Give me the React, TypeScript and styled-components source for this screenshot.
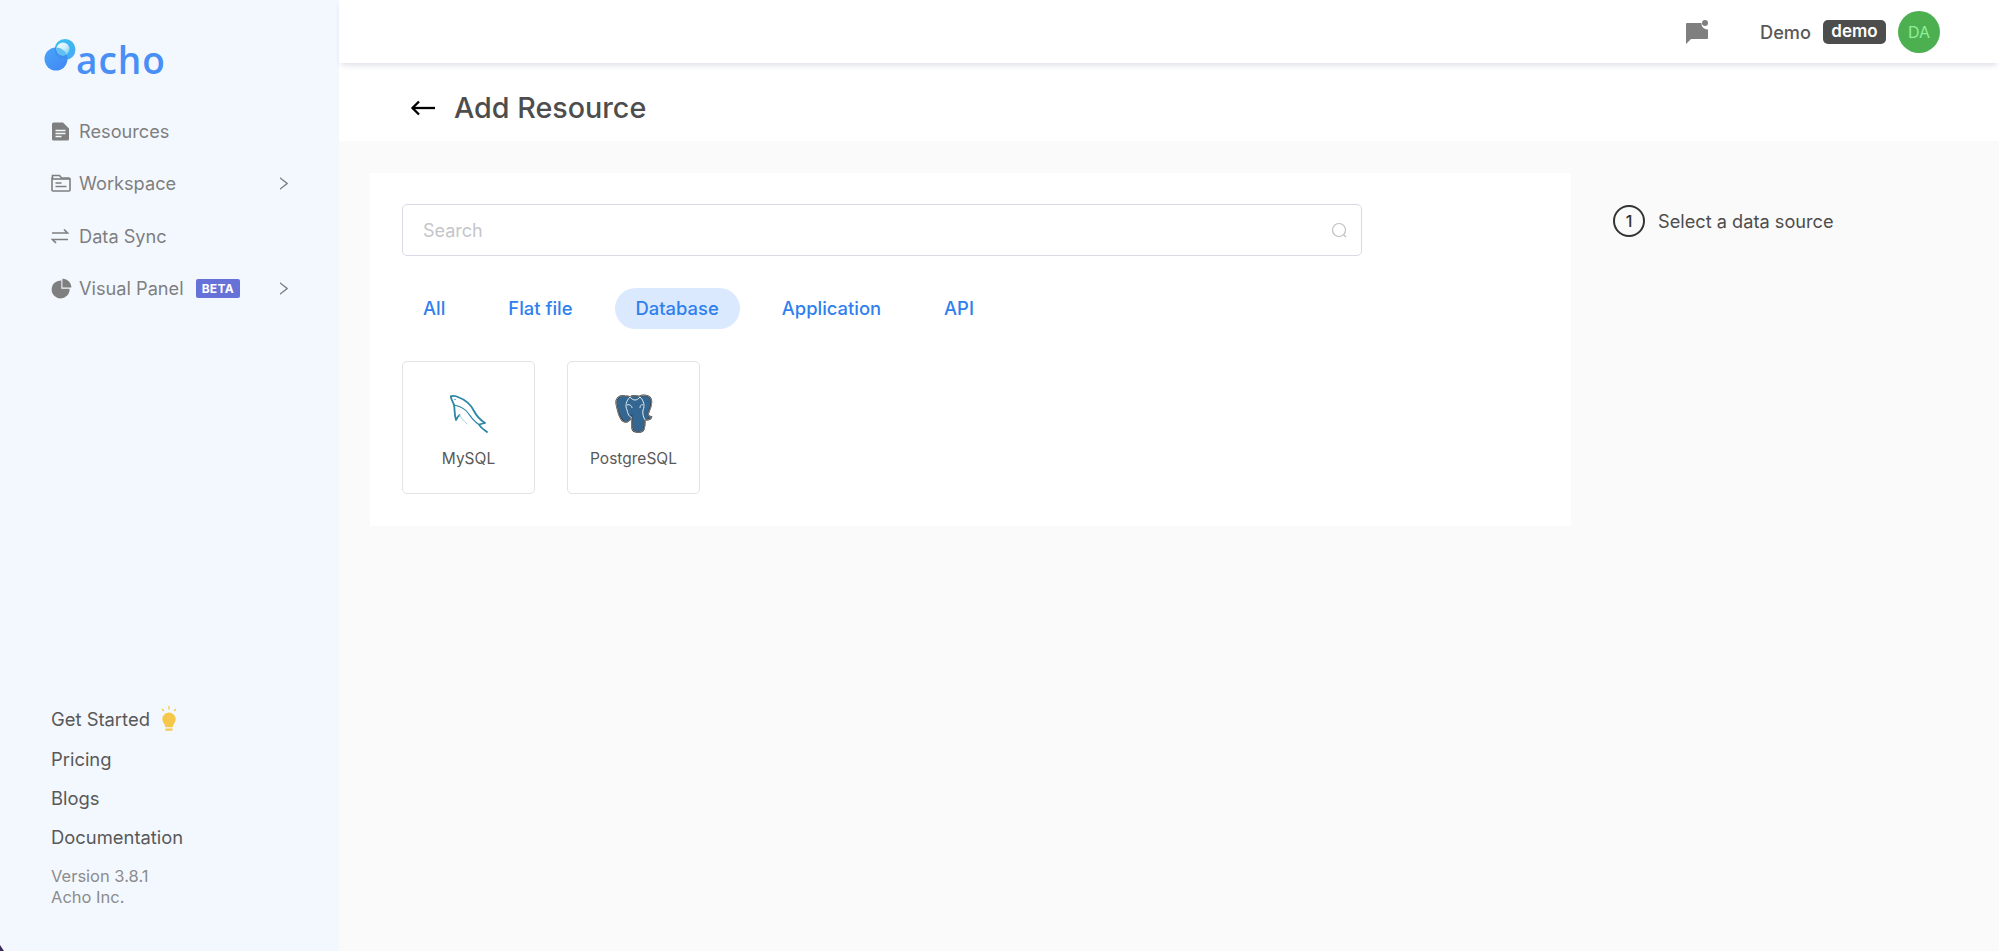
import styled, { createGlobalStyle } from 'styled-components';
import { AiFillPieChart, AiOutlineRight } from 'react-icons/ai';

const GlobalStyle = createGlobalStyle`
  html, body {
    margin: 0;
    padding: 0;
    background: #fafafa;
    font-family: Inter, "Liberation Sans", sans-serif;
  }
  * {
    box-sizing: border-box;
  }
`;

const PieIcon = styled(AiFillPieChart)`
  margin-left: -1.5px;
`;

const navItems = [
  { label: 'Resources', icon: <FileIcon /> },
  { label: 'Workspace', icon: <FolderIcon />, arrow: true },
  { label: 'Data Sync', icon: <SyncIcon /> },
  { label: 'Visual Panel', icon: <PieIcon size={23} />, arrow: true, beta: true },
];

const tabs = ['All', 'Flat file', 'Database', 'Application', 'API'];

function FileIcon() {
  return (
    <svg width="19" height="19" viewBox="0 0 19 19">
      <path d="M2.500 .5H12l6 6v10.500a1.500 1.500 0 0 1-1.500 1.500h-14A1.500 1.500 0 0 1 1 17V2A1.500 1.500 0 0 1 2.500 .5z" fill="currentColor" />
      <path d="M4.500 8.500h10M4.500 11.500h10M4.500 14.500h6" stroke="#f3f8ff" strokeWidth="1.400" />
    </svg>
  );
}

function FolderIcon() {
  return (
    <svg width="20" height="20" viewBox="0 0 20 20" fill="none" stroke="currentColor" strokeWidth="1.6">
      <path d="M1.500 5V2.500h7l2 2.500h7.500a1 1 0 0 1 1 1V17a1 1 0 0 1-1 1H2a1 1 0 0 1-1-1V5z" />
      <path d="M1 6h18" />
      <path d="M4.500 10h6M4.500 13.500h11" />
    </svg>
  );
}

function SyncIcon() {
  return (
    <svg width="18" height="18" viewBox="0 0 18 18" fill="none" stroke="currentColor" strokeWidth="1.700">
      <path d="M1 6h15.500L13 2.500" />
      <path d="M17 12.500H1.500L5 16" />
    </svg>
  );
}

function LogoMark() {
  return (
    <svg width="32" height="32" viewBox="0 0 32 32">
      <defs>
        <linearGradient id="logoBack" x1="0" y1="0" x2="1" y2="1">
          <stop offset="0" stopColor="#4aa5f7" />
          <stop offset="1" stopColor="#3f86f5" />
        </linearGradient>
        <linearGradient id="logoFront" x1="0" y1="0" x2="1" y2="1">
          <stop offset="0" stopColor="#35c2f0" />
          <stop offset="1" stopColor="#4aa8f5" />
        </linearGradient>
        <linearGradient id="logoHole" x1="0" y1="0" x2="1" y2="1">
          <stop offset="0" stopColor="#f4fbff" />
          <stop offset="0.5" stopColor="#d4f1fb" />
          <stop offset="1" stopColor="#57c8ee" />
        </linearGradient>
        <clipPath id="logoLens">
          <circle cx="12" cy="20" r="11.500" />
        </clipPath>
      </defs>
      <circle cx="12" cy="20" r="11.500" fill="url(#logoBack)" />
      <circle cx="21" cy="10.500" r="10.500" fill="url(#logoFront)" />
      <circle cx="21" cy="10.500" r="10.500" fill="#3f8ff2" clipPath="url(#logoLens)" />
      <circle cx="19" cy="10" r="6.500" fill="url(#logoHole)" />
      <circle cx="19" cy="10" r="6.500" fill="#5fc0f2" clipPath="url(#logoLens)" />
    </svg>
  );
}

function BulbIcon() {
  return (
    <svg width="16" height="27" viewBox="0 0 16 27">
      <path d="M8 0v3.500M1 3l2 2M15 3l-2 2" stroke="#f5c84c" strokeWidth="1.300" fill="none" />
      <path d="M8 6.500a6.700 6.700 0 0 1 6.700 6.700c0 3.200-2.700 4.800-3 8H4.300c-.3-3.200-3-4.800-3-8A6.700 6.700 0 0 1 8 6.500z" fill="#f5c84c" />
      <rect x="4.500" y="22.500" width="7" height="2.200" fill="#f5c84c" />
    </svg>
  );
}

function ChatIcon() {
  return (
    <svg width="23" height="24" viewBox="0 0 23 24" fill="#7f7f7f">
      <path d="M0 4a1 1 0 0 1 1-1h14.500a6 6 0 0 0 6.500 6.500V18a1 1 0 0 1-1 1H5l-5 5z" />
      <circle cx="19" cy="3" r="3" />
    </svg>
  );
}

function BackArrow() {
  return (
    <svg width="25" height="16" viewBox="0 0 25 16" fill="none" stroke="#000" strokeWidth="2.300">
      <path d="M25 8H2.500" />
      <path d="M9 1.500L2.500 8L9 14.500" />
    </svg>
  );
}

function SearchIcon() {
  return (
    <svg width="17" height="17" viewBox="0 0 17 17" fill="none" stroke="#bfbfbf" strokeWidth="1.200">
      <circle cx="8" cy="8" r="6.500" />
      <path d="M12.800 12.800l2.200 2.200" />
    </svg>
  );
}

function DolphinIcon() {
  return (
    <svg width="38" height="38" viewBox="0 0 38 38" fill="none" stroke="#2b86a8" strokeWidth="1.800" strokeLinecap="round" strokeLinejoin="round">
      <path d="M.7 1.500C3 .5 6 1 9 2.500c7 2.500 12 7.500 15 13.500 2 4 5 8 11 12l-6 1.500c1 2.500 4 4.500 8 7.500" />
      <path d="M.7 1.500C1 4 3 7 4 10c1 4 0 9 2 15 1-2 2-4 3.500-5" />
      <path d="M4 10c4 1 10 2 14 8 3 4 6 9 11 11.500" strokeWidth="1.200" />
      <path d="M9.500 20c1.500 3 3.500 5 7.500 9" stroke="#a9cfdd" strokeWidth="1" />
      <circle cx="5" cy="4.500" r=".7" fill="#2b86a8" stroke="none" />
    </svg>
  );
}

function ElephantIcon() {
  const outline =
    'M9 1C3 0-1 4 .5 10 2 17 4 26 9 27c3 .5 5-2 6.500-5l.5 11c1 5 10 6 12 1 1-3 1-6 1-9 3 0 6-1 6.500-3-2.500-.5-3.500-1-3.500-3 2-5 5-10 3-15-2-4-8-4.500-11.500-2.500-3.500-1-7.500-1-9.500.5-2-1-3.500-1-5-1z';
  return (
    <svg width="38" height="40" viewBox="-1 -1 38 40">
      <path d={outline} fill="#336791" stroke="#2a2a2a" strokeWidth="1.500" />
      <path d={outline} fill="none" stroke="#c9cdd1" strokeWidth="0.600" />
      <path
        d="M14 2c-4 4-5 9-3 13 1 4 2 7 4.500 7M11 10c3-1 5 1 5 3M14 2c3 4 7 4 10 0M24 2c4 4 5 9 3 13-1 4 1 8 2 10M27 10c-2-1-3 1-3 3"
        fill="none"
        stroke="#e6edf3"
        strokeWidth="1"
      />
    </svg>
  );
}

export default function App() {
  return (
    <>
      <GlobalStyle />
      <Layout>
        <Sidebar>
          <div>
            <Logo>
              <LogoMark />
              <LogoText>acho</LogoText>
            </Logo>
            <Nav>
              {navItems.map((item) => (
                <NavItem key={item.label}>
                  <NavIcon>{item.icon}</NavIcon>
                  <span>{item.label}</span>
                  {item.beta && <Beta>BETA</Beta>}
                  {item.arrow && (
                    <NavArrow>
                      <AiOutlineRight size={17} />
                    </NavArrow>
                  )}
                </NavItem>
              ))}
            </Nav>
          </div>
          <Footer>
            <FooterLink>
              Get Started
              <BulbIcon />
            </FooterLink>
            <FooterLink>Pricing</FooterLink>
            <FooterLink>Blogs</FooterLink>
            <FooterLink>Documentation</FooterLink>
            <Version>
              Version 3.8.1
              <br />
              Acho Inc.
            </Version>
          </Footer>
        </Sidebar>
        <Main>
          <TopBar>
            <ChatButton>
              <ChatIcon />
            </ChatButton>
            <UserName>Demo</UserName>
            <RoleBadge>demo</RoleBadge>
            <Avatar>DA</Avatar>
          </TopBar>
          <PageHeader>
            <BackArrow />
            <PageTitle>Add Resource</PageTitle>
          </PageHeader>
          <Content>
            <Card>
              <SearchBox>
                <SearchInput placeholder="Search" />
                <SearchIcon />
              </SearchBox>
              <Tabs>
                {tabs.map((tab) => (
                  <Tab key={tab} $active={tab === 'Database'}>
                    {tab}
                  </Tab>
                ))}
              </Tabs>
              <Sources>
                <Source>
                  <SourceLogo>
                    <DolphinIcon />
                  </SourceLogo>
                  MySQL
                </Source>
                <Source>
                  <SourceLogo>
                    <ElephantIcon />
                  </SourceLogo>
                  PostgreSQL
                </Source>
              </Sources>
            </Card>
            <Step>
              <StepNumber>1</StepNumber>
              Select a data source
            </Step>
          </Content>
        </Main>
        <WindowCorner />
      </Layout>
    </>
  );
}

const Layout = styled.div`
  display: flex;
  width: 100%;
  height: 951px;
  overflow: hidden;
  position: relative;
`;

const WindowCorner = styled.div`
  position: absolute;
  left: 0;
  bottom: 0;
  width: 4px;
  height: 6px;
  background: #3d2a5c;
  clip-path: polygon(0 0, 100% 100%, 0 100%);
`;

const Sidebar = styled.aside`
  flex: 0 0 339px;
  display: flex;
  flex-direction: column;
  justify-content: space-between;
  padding: 39px 0 43px 51px;
  background: #f3f8ff;
`;

const Logo = styled.div`
  display: flex;
  align-items: flex-start;
  height: 42px;
  margin-left: -7px;
`;

const LogoText = styled.span`
  font-family: "Open Sans", sans-serif;
  font-size: 37px;
  line-height: 42px;
  font-weight: 600;
  letter-spacing: 1px;
  color: #4a8ff5;
`;

const Nav = styled.nav`
  display: flex;
  flex-direction: column;
  margin-top: 24px;
`;

const NavItem = styled.div`
  display: flex;
  align-items: center;
  height: 52.3px;
  font-size: 18.2px;
  color: #7f7f7f;
`;

const NavIcon = styled.span`
  display: flex;
  align-items: center;
  width: 28px;
`;

const NavArrow = styled.span`
  display: flex;
  margin-left: auto;
  margin-right: 47px;
`;

const Beta = styled.span`
  margin-left: 12px;
  padding: 0 6px;
  height: 19px;
  line-height: 19px;
  border-radius: 2px;
  background: #6772d8;
  color: #fff;
  font-size: 12px;
  font-weight: 700;
  letter-spacing: 0.3px;
`;

const Footer = styled.div`
  display: flex;
  flex-direction: column;
`;

const FooterLink = styled.div`
  display: flex;
  align-items: center;
  gap: 11px;
  height: 39.3px;
  font-size: 18.4px;
  color: #595959;
`;

const Version = styled.div`
  margin-top: 9px;
  font-size: 16.5px;
  line-height: 21px;
  color: #8c8c8c;
`;

const Main = styled.main`
  flex: 1;
  display: flex;
  flex-direction: column;
  min-width: 0;
`;

const TopBar = styled.header`
  display: flex;
  align-items: center;
  justify-content: flex-end;
  height: 63px;
  padding-right: 59px;
  background: #fff;
  box-shadow: 0 4px 6px -2px rgba(60, 70, 120, 0.18);
  position: relative;
`;

const ChatButton = styled.span`
  display: flex;
  margin-right: 51px;
`;

const UserName = styled.span`
  font-size: 18.2px;
  font-weight: 500;
  color: #595959;
`;

const RoleBadge = styled.span`
  margin-left: 12px;
  width: 63px;
  height: 24px;
  line-height: 23px;
  border-radius: 5px;
  background: #4d4d4d;
  color: #fff;
  font-size: 17px;
  font-weight: 600;
  text-align: center;
`;

const Avatar = styled.span`
  display: flex;
  align-items: center;
  justify-content: center;
  margin-left: 12px;
  width: 42px;
  height: 42px;
  border-radius: 50%;
  background: #4caf50;
  color: #8ff09a;
  font-size: 16px;
`;

const PageHeader = styled.div`
  display: flex;
  align-items: center;
  gap: 19px;
  height: 78px;
  padding: 11px 0 0 71px;
  background: #fff;
`;

const PageTitle = styled.h1`
  margin: 0;
  font-size: 28.7px;
  font-weight: 500;
  color: #4d4d4d;
`;

const Content = styled.div`
  flex: 1;
  display: flex;
  align-items: flex-start;
  gap: 42px;
  padding: 32px 0 0 31px;
  background: #fafafa;
`;

const Card = styled.section`
  flex: 0 0 1201px;
  height: 353px;
  padding: 31px 32px;
  background: #fff;
`;

const SearchBox = styled.label`
  display: flex;
  align-items: center;
  width: 960px;
  height: 52px;
  padding: 0 13px 0 20px;
  border: 1px solid #d9dae8;
  border-radius: 5px;
`;

const SearchInput = styled.input`
  flex: 1;
  border: none;
  outline: none;
  padding: 0;
  font-family: inherit;
  font-size: 18px;
  color: #595959;
  &::placeholder {
    color: #c4c6cc;
  }
`;

const Tabs = styled.div`
  display: flex;
  gap: 21px;
  margin-top: 32px;
`;

const Tab = styled.span<{ $active?: boolean }>`
  height: 41px;
  line-height: 41px;
  padding: 0 21px;
  border-radius: 21px;
  background: ${(props) => (props.$active ? '#dbe9fe' : 'transparent')};
  color: #2f80ed;
  font-size: 18.4px;
  font-weight: 500;
`;

const Sources = styled.div`
  display: flex;
  gap: 32px;
  margin-top: 32px;
`;

const Source = styled.div`
  display: flex;
  flex-direction: column;
  align-items: center;
  width: 133px;
  height: 133px;
  padding-top: 32px;
  border: 1px solid #e3e3e3;
  border-radius: 5px;
  font-size: 15.5px;
  color: #595959;
`;

const SourceLogo = styled.div`
  display: flex;
  align-items: center;
  justify-content: center;
  height: 40px;
  margin-bottom: 15px;
`;

const Step = styled.div`
  display: flex;
  align-items: center;
  gap: 13px;
  margin-top: 32px;
  font-size: 18.2px;
  color: #4d4d4d;
`;

const StepNumber = styled.span`
  display: flex;
  align-items: center;
  justify-content: center;
  width: 32px;
  height: 32px;
  border: 2px solid #333;
  border-radius: 50%;
  font-size: 16px;
  font-weight: 500;
  color: #333;
`;
